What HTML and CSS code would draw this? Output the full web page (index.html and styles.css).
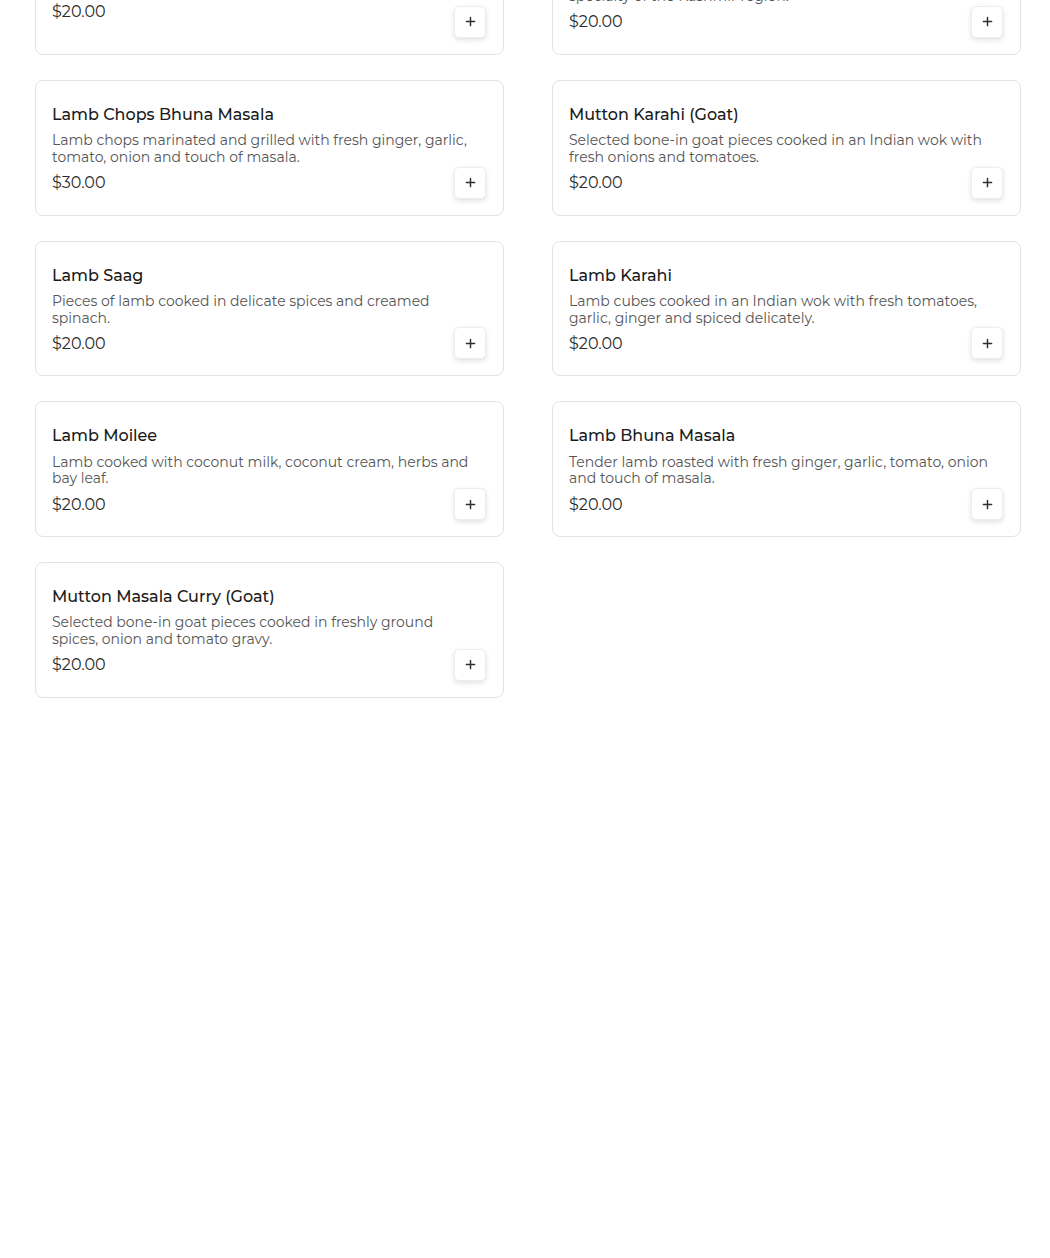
FILE: index.html
```html
<!DOCTYPE html>
<html lang="en">
<head>
<meta charset="utf-8">
<title>Lamb &amp; Goat</title>
<link rel="stylesheet" href="styles.css">
</head>
<body>
<main class="menu">
  <div class="menu-grid">
    <article class="item-card">
      <h3 class="item-title">Lamb Vindaloo</h3>
      <p class="item-desc item-desc--short">Lamb cooked in a hot and tangy curry sauce.</p>
      <div class="item-foot item-foot--raised">
        <span class="item-price">$20.00</span>
        <button class="add-btn" aria-label="Add"><svg viewBox="0 0 12 12" width="12" height="12"><path d="M6 1.5v9M1.5 6h9" stroke="currentColor" stroke-width="1.6" stroke-linecap="round"/></svg></button>
      </div>
    </article>
    <article class="item-card">
      <h3 class="item-title">Lamb Rogan Josh</h3>
      <p class="item-desc">Tender lamb cooked in a rich onion and tomato gravy, a<br>specialty of the Kashmir region.</p>
      <div class="item-foot">
        <span class="item-price">$20.00</span>
        <button class="add-btn" aria-label="Add"><svg viewBox="0 0 12 12" width="12" height="12"><path d="M6 1.5v9M1.5 6h9" stroke="currentColor" stroke-width="1.6" stroke-linecap="round"/></svg></button>
      </div>
    </article>
    <article class="item-card">
      <h3 class="item-title">Lamb Chops Bhuna Masala</h3>
      <p class="item-desc">Lamb chops marinated and grilled with fresh ginger, garlic, tomato, onion and touch of masala.</p>
      <div class="item-foot">
        <span class="item-price">$30.00</span>
        <button class="add-btn" aria-label="Add"><svg viewBox="0 0 12 12" width="12" height="12"><path d="M6 1.5v9M1.5 6h9" stroke="currentColor" stroke-width="1.6" stroke-linecap="round"/></svg></button>
      </div>
    </article>
    <article class="item-card">
      <h3 class="item-title">Mutton Karahi (Goat)</h3>
      <p class="item-desc">Selected bone-in goat pieces cooked in an Indian wok with fresh onions and tomatoes.</p>
      <div class="item-foot">
        <span class="item-price">$20.00</span>
        <button class="add-btn" aria-label="Add"><svg viewBox="0 0 12 12" width="12" height="12"><path d="M6 1.5v9M1.5 6h9" stroke="currentColor" stroke-width="1.6" stroke-linecap="round"/></svg></button>
      </div>
    </article>
    <article class="item-card">
      <h3 class="item-title">Lamb Saag</h3>
      <p class="item-desc">Pieces of lamb cooked in delicate spices and creamed spinach.</p>
      <div class="item-foot">
        <span class="item-price">$20.00</span>
        <button class="add-btn" aria-label="Add"><svg viewBox="0 0 12 12" width="12" height="12"><path d="M6 1.5v9M1.5 6h9" stroke="currentColor" stroke-width="1.6" stroke-linecap="round"/></svg></button>
      </div>
    </article>
    <article class="item-card">
      <h3 class="item-title">Lamb Karahi</h3>
      <p class="item-desc">Lamb cubes cooked in an Indian wok with fresh tomatoes, garlic, ginger and spiced delicately.</p>
      <div class="item-foot">
        <span class="item-price">$20.00</span>
        <button class="add-btn" aria-label="Add"><svg viewBox="0 0 12 12" width="12" height="12"><path d="M6 1.5v9M1.5 6h9" stroke="currentColor" stroke-width="1.6" stroke-linecap="round"/></svg></button>
      </div>
    </article>
    <article class="item-card">
      <h3 class="item-title">Lamb Moilee</h3>
      <p class="item-desc">Lamb cooked with coconut milk, coconut cream, herbs and bay leaf.</p>
      <div class="item-foot">
        <span class="item-price">$20.00</span>
        <button class="add-btn" aria-label="Add"><svg viewBox="0 0 12 12" width="12" height="12"><path d="M6 1.5v9M1.5 6h9" stroke="currentColor" stroke-width="1.6" stroke-linecap="round"/></svg></button>
      </div>
    </article>
    <article class="item-card">
      <h3 class="item-title">Lamb Bhuna Masala</h3>
      <p class="item-desc">Tender lamb roasted with fresh ginger, garlic, tomato, onion and touch of masala.</p>
      <div class="item-foot">
        <span class="item-price">$20.00</span>
        <button class="add-btn" aria-label="Add"><svg viewBox="0 0 12 12" width="12" height="12"><path d="M6 1.5v9M1.5 6h9" stroke="currentColor" stroke-width="1.6" stroke-linecap="round"/></svg></button>
      </div>
    </article>
    <article class="item-card">
      <h3 class="item-title">Mutton Masala Curry (Goat)</h3>
      <p class="item-desc">Selected bone-in goat pieces cooked in freshly ground spices, onion and tomato gravy.</p>
      <div class="item-foot">
        <span class="item-price">$20.00</span>
        <button class="add-btn" aria-label="Add"><svg viewBox="0 0 12 12" width="12" height="12"><path d="M6 1.5v9M1.5 6h9" stroke="currentColor" stroke-width="1.6" stroke-linecap="round"/></svg></button>
      </div>
    </article>
  </div>
</main>
</body>
</html>
```
FILE: styles.css
```css
* { box-sizing: border-box; }
html, body {
  margin: 0;
  padding: 0;
  background: #ffffff;
}
body {
  font-family: "Montserrat", "DejaVu Sans", sans-serif;
  color: #1c1c1c;
  overflow: hidden;
}
.menu {
  padding: 0 29px 0 35px;
}
.menu-grid {
  display: grid;
  grid-template-columns: 1fr 1fr;
  column-gap: 48px;
  row-gap: 25px;
  margin-top: -81px;
}
.item-card {
  display: flex;
  flex-direction: column;
  border: 1px solid #e3e3e3;
  border-radius: 8px;
  padding: 24px 17px 16px 16px;
  background: #fff;
}
.item-title {
  margin: 0;
  font-size: 16px;
  line-height: 1.2;
  font-weight: 500;
  color: #1a1a1a;
}
.item-desc {
  margin: 8px 0 0;
  padding-right: 12px;
  font-size: 14px;
  line-height: 1.2;
  color: #555555;
  min-height: 33.6px;
}
.item-desc--short { min-height: 24px; }
.item-foot {
  margin-top: auto;
  padding-top: 1px;
  display: flex;
  align-items: center;
  justify-content: space-between;
}
.item-foot--raised .item-price {
  align-self: flex-start;
  margin-top: -4px;
}
.item-price {
  font-size: 16px;
  line-height: 1.2;
  color: #2b2b2b;
}
.add-btn {
  width: 32px;
  height: 32px;
  padding: 0;
  display: flex;
  align-items: center;
  justify-content: center;
  border: 1px solid #ededed;
  border-radius: 5px;
  background: #fff;
  color: #2f2f2f;
  box-shadow: 0 2px 5px rgba(0, 0, 0, 0.12);
  cursor: pointer;
}
.add-btn svg { display: block; width: 11px; height: 11px; }
```
